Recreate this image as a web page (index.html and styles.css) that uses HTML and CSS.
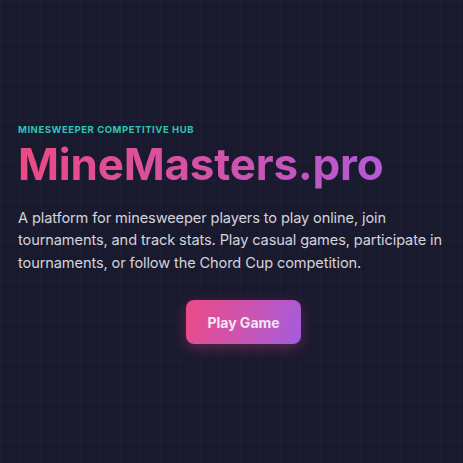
FILE: index.html
```html
<!DOCTYPE html>
<html lang="en">
<head>
<meta charset="utf-8">
<title>MineMasters.pro</title>
<link rel="stylesheet" href="styles.css">
</head>
<body>
<main class="hero">
  <div class="hero-inner">
    <p class="eyebrow">MINESWEEPER COMPETITIVE HUB</p>
    <h1 class="title">MineMasters.pro</h1>
    <p class="lead">A platform for minesweeper players to play online, join tournaments, and track stats. Play casual games, participate in tournaments, or follow the Chord Cup competition.</p>
    <div class="actions">
      <a class="btn" href="#">Play Game</a>
    </div>
  </div>
</main>
</body>
</html>
```
FILE: styles.css
```css
* { box-sizing: border-box; }
html, body {
  margin: 0;
  height: 100%;
}
body {
  background-color: #1a1a2e;
  background-image:
    linear-gradient(rgba(120, 120, 200, 0.035) 1px, transparent 1px),
    linear-gradient(90deg, rgba(120, 120, 200, 0.035) 1px, transparent 1px);
  background-size: 20px 20px;
  font-family: Inter, "Noto Sans", sans-serif;
  color: #d1d5db;
}
.hero {
  padding: 124px 12px 0 18px;
}
.eyebrow {
  margin: 0 0 2px;
  font-size: 9.5px;
  line-height: 12px;
  font-weight: 700;
  letter-spacing: 0.55px;
  color: #2ec4b6;
}
.title {
  margin: 0 0 16px;
  font-size: 44px;
  font-weight: 700;
  line-height: 1.2;
  letter-spacing: -0.2px;
  background: linear-gradient(90deg, #ec4a84 0%, #d452a6 50%, #b45ad6 100%);
  -webkit-background-clip: text;
  background-clip: text;
  color: transparent;
  display: inline-block;
}
.lead {
  margin: 0 0 26px;
  font-size: 14.6px;
  line-height: 22.5px;
  letter-spacing: -0.12px;
  color: #d4d4dc;
}
.actions {
  display: flex;
  justify-content: center;
  padding-left: 18px;
}
.btn {
  display: inline-flex;
  align-items: center;
  justify-content: center;
  width: 115px;
  height: 44px;
  border-radius: 8px;
  background: linear-gradient(110deg, #ec4a84 0%, #c955b4 55%, #a25ce0 100%);
  color: #f3e6f0;
  font-size: 14px;
  font-weight: 700;
  text-decoration: none;
  box-shadow: 0 4px 14px rgba(236, 72, 153, 0.3);
}
```
